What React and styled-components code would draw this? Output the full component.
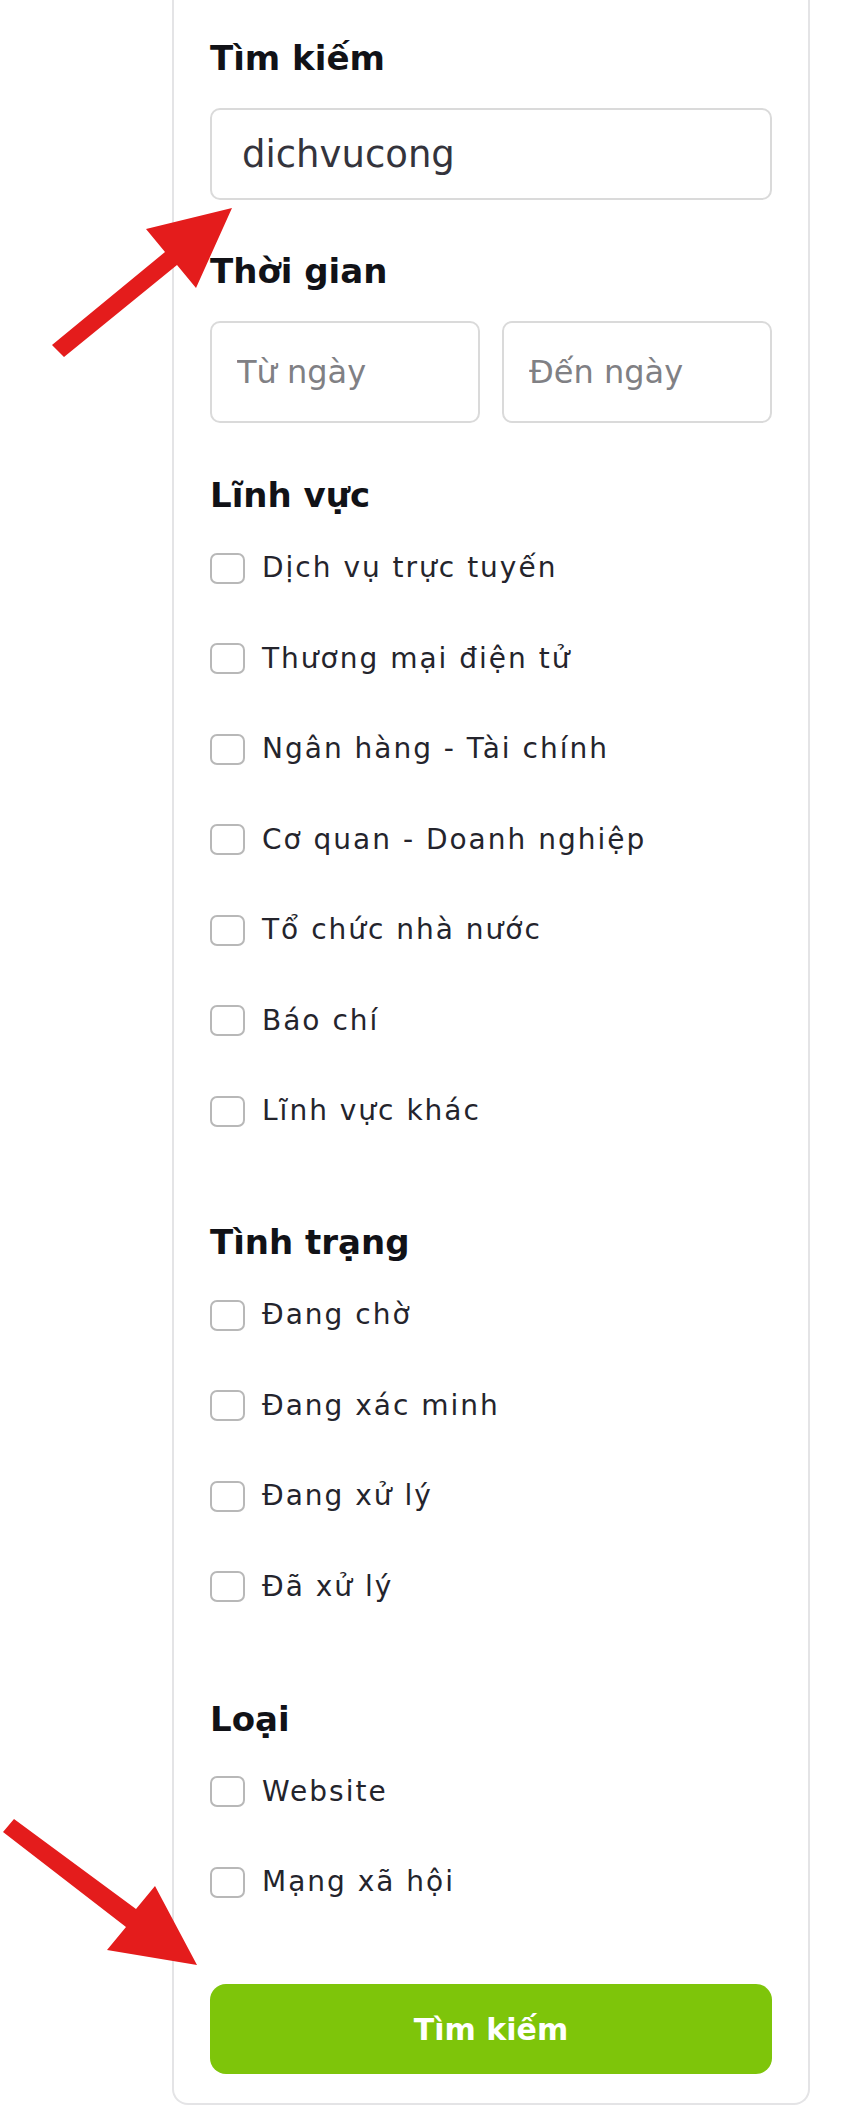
import React from 'react'
import styled, { createGlobalStyle } from 'styled-components'

const GlobalStyle = createGlobalStyle`
  html, body {
    margin: 0;
    padding: 0;
    background: #ffffff;
  }
  body {
    font-family: "DejaVu Sans", Verdana, sans-serif;
    color: #1c1c1c;
  }
`

const Page = styled.div`
  position: relative;
  width: 850px;
  min-height: 2110px;
  padding-left: 172px;
  box-sizing: border-box;
`

const Card = styled.form`
  width: 638px;
  box-sizing: border-box;
  border: 2px solid #e4e4e6;
  border-top: none;
  border-radius: 0 0 16px 16px;
  padding: 38px 36px 29px;
  display: flex;
  flex-direction: column;
`

const Section = styled.section`
  margin-top: ${(p) => p.$gap || 0}px;
  display: flex;
  flex-direction: column;
`

const Heading = styled.h3`
  margin: 0 0 30px;
  font-size: 34px;
  line-height: 40px;
  font-weight: 700;
  color: #111217;
`

const TextInput = styled.input`
  box-sizing: border-box;
  width: 100%;
  height: ${(p) => p.$height || 92}px;
  border: 2px solid #dadada;
  border-radius: 10px;
  padding: 0 ${(p) => p.$pad || 30}px;
  font-family: "DejaVu Sans", Verdana, sans-serif;
  font-size: ${(p) => p.$size || 37}px;
  color: #34343c;
  background: #fff;
  outline: none;

  &::placeholder {
    color: #808084;
  }
`

const DateRow = styled.div`
  display: grid;
  grid-template-columns: 1fr 1fr;
  gap: 22px;
`

const List = styled.div`
  display: flex;
  flex-direction: column;
  gap: 46.5px;
  padding-top: 1px;
`

const Option = styled.label`
  display: flex;
  align-items: center;
  gap: 17px;
  height: 44px;
  font-size: 28px;
  line-height: 44px;
  letter-spacing: 2px;
  color: #24242c;
  cursor: pointer;
`

const Box = styled.input.attrs({ type: 'checkbox' })`
  appearance: none;
  margin: 0;
  flex: none;
  width: 35px;
  height: 31px;
  border: 2px solid #b8b8b8;
  border-radius: 7px;
  background: #fff;
`

const SubmitButton = styled.button`
  margin-top: 80px;
  height: 90px;
  border: none;
  border-radius: 16px;
  background: #7ec50a;
  color: #ffffff;
  font-family: "DejaVu Sans", Verdana, sans-serif;
  font-size: 30px;
  font-weight: 700;
  cursor: pointer;
`

const Overlay = styled.svg`
  position: absolute;
  left: 0;
  top: 0;
  pointer-events: none;
`

const fields = [
  'Dịch vụ trực tuyến',
  'Thương mại điện tử',
  'Ngân hàng - Tài chính',
  'Cơ quan - Doanh nghiệp',
  'Tổ chức nhà nước',
  'Báo chí',
  'Lĩnh vực khác',
]

const statuses = ['Đang chờ', 'Đang xác minh', 'Đang xử lý', 'Đã xử lý']

const kinds = ['Website', 'Mạng xã hội']

const CheckList = ({ items }) => (
  <List>
    {items.map((item) => (
      <Option key={item}>
        <Box />
        {item}
      </Option>
    ))}
  </List>
)

export default function App() {
  return (
    <Page>
      <GlobalStyle />
      <Card onSubmit={(e) => e.preventDefault()}>
        <Section>
          <Heading>Tìm kiếm</Heading>
          <TextInput defaultValue="dichvucong" />
        </Section>

        <Section $gap={51}>
          <Heading>Thời gian</Heading>
          <DateRow>
            <TextInput $height={102} $pad={25} $size={32} placeholder="Từ ngày" />
            <TextInput $height={102} $pad={25} $size={32} placeholder="Đến ngày" />
          </DateRow>
        </Section>

        <Section $gap={52}>
          <Heading>Lĩnh vực</Heading>
          <CheckList items={fields} />
        </Section>

        <Section $gap={89}>
          <Heading>Tình trạng</Heading>
          <CheckList items={statuses} />
        </Section>

        <Section $gap={90}>
          <Heading>Loại</Heading>
          <CheckList items={kinds} />
        </Section>

        <SubmitButton type="submit">Tìm kiếm</SubmitButton>
      </Card>

      {/* annotation arrows drawn over the form */}
      <Overlay width="850" height="2110" viewBox="0 0 850 2110">
        <polygon
          fill="#e41c1c"
          points="52,345 165,252 146,229 232,208 196,288 177,265 64,357"
        />
        <polygon
          fill="#e41c1c"
          points="14,1819 136,1909 155,1886 197,1965 107,1950 126,1927 3,1832"
        />
      </Overlay>
    </Page>
  )
}
